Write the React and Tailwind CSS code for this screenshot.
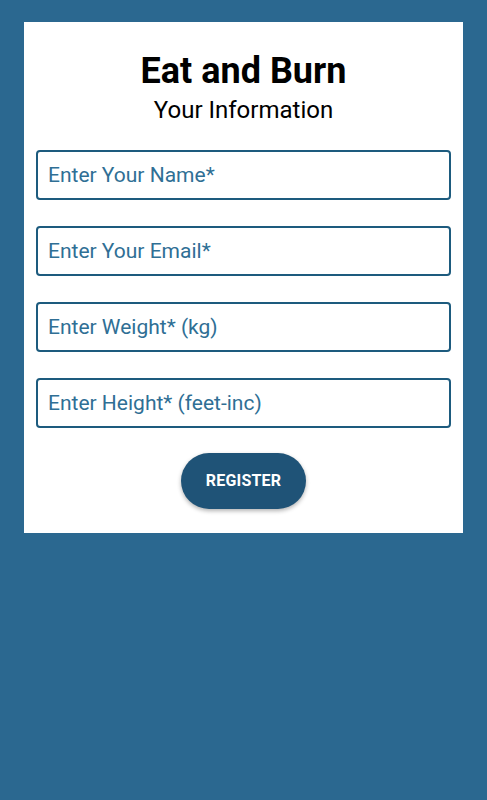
import { useState } from 'react';

const fields = [
  { name: 'name', placeholder: 'Enter Your Name*' },
  { name: 'email', placeholder: 'Enter Your Email*' },
  { name: 'weight', placeholder: 'Enter Weight* (kg)' },
  { name: 'height', placeholder: 'Enter Height* (feet-inc)' },
];

export default function App() {
  const [form, setForm] = useState({ name: '', email: '', weight: '', height: '' });

  return (
    <div className="min-h-screen w-full bg-[#2b6890] px-6 pt-[22px] font-['Roboto',sans-serif]">
      <div className="bg-white px-3 pt-[34px] pb-6 flex flex-col">
        <h1 className="text-center text-[36px] leading-[30px] font-bold text-black">Eat and Burn</h1>
        <h2 className="text-center text-[24px] leading-[26px] mt-[11px] text-black">Your Information</h2>
        <div className="flex flex-col gap-[26px] mt-[27px]">
          {fields.map((f) => (
            <input
              key={f.name}
              value={form[f.name]}
              onChange={(e) => setForm({ ...form, [f.name]: e.target.value })}
              placeholder={f.placeholder}
              className="h-[50px] w-full rounded-[4px] border-2 border-[#1d5b7e] px-[10px] text-[21px] text-[#2b6890] placeholder:text-[#2f6f95] outline-none"
            />
          ))}
        </div>
        <button
          type="button"
          className="self-center mt-[25px] h-[56px] w-[125px] rounded-full bg-[#1f5377] text-white text-[16px] font-bold tracking-[0.2px] shadow-[0_2px_4px_rgba(0,0,0,0.3)]"
        >
          REGISTER
        </button>
      </div>
    </div>
  );
}
